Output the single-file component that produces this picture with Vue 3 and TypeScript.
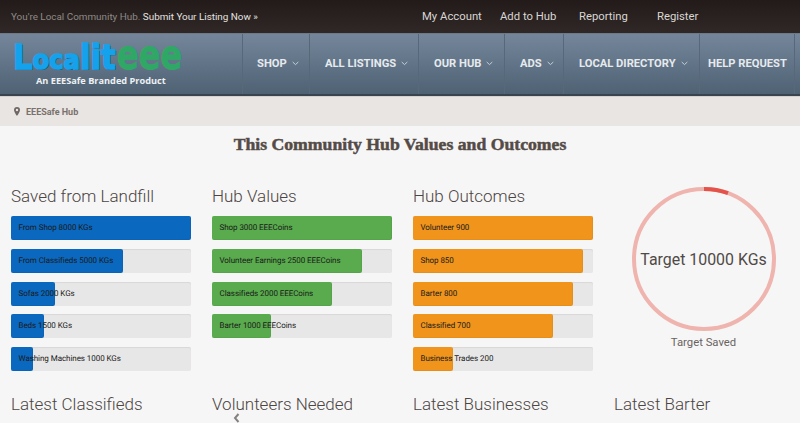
<script setup lang="ts">
interface Bar { label: string; pct: number }
interface Col { title: string; tone: string; bars: Bar[] }
const navItems: { label: string; width: number; caret: boolean }[] = [
  { label: 'SHOP', width: 67, caret: true },
  { label: 'ALL LISTINGS', width: 109, caret: true },
  { label: 'OUR HUB', width: 86, caret: true },
  { label: 'ADS', width: 59, caret: true },
  { label: 'LOCAL DIRECTORY', width: 136, caret: true },
  { label: 'HELP REQUEST', width: 96, caret: false },
]
const topLinks = [
  { label: 'My Account', width: 78 },
  { label: 'Add to Hub', width: 79 },
  { label: 'Reporting', width: 78 },
  { label: 'Register', width: 60 },
]
const cols: Col[] = [
  { title: 'Saved from Landfill', tone: 'blue', bars: [
    { label: 'From Shop 8000 KGs', pct: 100 },
    { label: 'From Classifieds 5000 KGs', pct: 62.3 },
    { label: 'Sofas 2000 KGs', pct: 24.6 },
    { label: 'Beds 1500 KGs', pct: 18.5 },
    { label: 'Washing Machines 1000 KGs', pct: 12.4 },
  ] },
  { title: 'Hub Values', tone: 'green', bars: [
    { label: 'Shop 3000 EEECoins', pct: 100 },
    { label: 'Volunteer Earnings 2500 EEECoins', pct: 83.3 },
    { label: 'Classifieds 2000 EEECoins', pct: 66.6 },
    { label: 'Barter 1000 EEECoins', pct: 33 },
  ] },
  { title: 'Hub Outcomes', tone: 'orange', bars: [
    { label: 'Volunteer 900', pct: 100 },
    { label: 'Shop 850', pct: 94.3 },
    { label: 'Barter 800', pct: 88.7 },
    { label: 'Classified 700', pct: 77.6 },
    { label: 'Business Trades 200', pct: 22 },
  ] },
]
const latest = ['Latest Classifieds', 'Volunteers Needed', 'Latest Businesses', 'Latest Barter']
</script>

<template>
  <div class="page">
    <header class="topbar">
      <p class="tagline">You're Local Community Hub. <a class="submit">Submit Your Listing Now »</a></p>
      <nav class="toplinks">
        <a v-for="l in topLinks" :key="l.label" :style="{ width: l.width + 'px' }">{{ l.label }}</a>
      </nav>
    </header>

    <div class="mainnav">
      <div class="brand">
        <div class="logo">
          <span class="blue-t"><span class="big">L</span>oca<span class="big">lit</span></span><span class="green-t">eee</span>
        </div>
        <div class="brand-sub">An EEESafe Branded Product</div>
      </div>
      <nav class="navlist">
        <a v-for="n in navItems" :key="n.label" class="navitem" :style="{ width: n.width + 'px' }">
          {{ n.label }}
          <svg v-if="n.caret" width="7" height="5" viewBox="0 0 7 5" class="caret">
            <path d="M.7 1l2.8 2.6L6.300 1" fill="none" stroke="#c3ced9" stroke-width="1" />
          </svg>
        </a>
      </nav>
    </div>

    <div class="crumb">
      <svg width="6" height="9" viewBox="0 0 6 9" class="pin">
        <path d="M3 0a3 3 0 0 1 3 3c0 2-3 6-3 6S0 5 0 3a3 3 0 0 1 3-3zm0 1.800a1.200 1.200 0 1 0 0 2.400 1.200 1.200 0 0 0 0-2.400z" fill="#6f6763" fill-rule="evenodd" />
      </svg>
      <span>EEESafe Hub</span>
    </div>

    <main class="content">
      <h1 class="title">This Community Hub Values and Outcomes</h1>
      <section class="grid charts">
        <div v-for="c in cols" :key="c.title" class="col">
          <h2>{{ c.title }}</h2>
          <div class="bars">
            <div v-for="b in c.bars" :key="b.label" class="bar">
              <div class="fill" :class="c.tone" :style="{ width: b.pct + '%' }"></div>
              <span class="bar-label">{{ b.label }}</span>
            </div>
          </div>
        </div>
        <div class="col ring-col">
          <div class="ring">
            <svg width="144" height="144" viewBox="0 0 144 144" class="ring-svg">
              <circle cx="72" cy="72" r="70" fill="none" stroke="#efb4ae" stroke-width="4" />
              <path d="M72 2A70 70 0 0 1 96 6.200" fill="none" stroke="#e4534a" stroke-width="4" />
            </svg>
            <span class="ring-text">Target 10000 KGs</span>
          </div>
          <div class="ring-cap">Target Saved</div>
        </div>
      </section>
      <section class="grid latest">
        <h2 v-for="t in latest" :key="t">{{ t }}</h2>
      </section>
      <svg width="7" height="10" viewBox="0 0 7 10" class="prev">
        <path d="M5.500 1L2 5l3.500 4" fill="none" stroke="#85817f" stroke-width="2" />
      </svg>
    </main>
  </div>
</template>

<style>
html, body { margin: 0; background: #f7f6f6; }
</style>

<style scoped>
.page {
  position: relative;
  width: 800px;
  height: 423px;
  overflow: hidden;
  font-family: Roboto, "Liberation Sans", sans-serif;
  background: #f7f6f6;
}
.topbar {
  height: 33px;
  display: flex;
  align-items: center;
  padding-left: 11px;
  background: linear-gradient(#221b19, #302826);
  box-sizing: border-box;
}
.tagline {
  margin: 0;
  width: 411px;
  font-size: 9.900px;
  color: #8f8a86;
  white-space: nowrap;
}
.submit { color: #e4e2e0; }
.toplinks { display: flex; }
.toplinks a { font-size: 11.300px; color: #d9d6d3; white-space: nowrap; }
.mainnav {
  height: 63px;
  display: flex;
  background: linear-gradient(#75869a, #4e6274);
  border-bottom: 2px solid #38454f;
  border-top: 1px solid #6d7a86;
  box-sizing: border-box;
}
.brand { width: 242px; padding-left: 13px; box-sizing: border-box; }
.logo {
  display: flex;
  align-items: baseline;
  height: 41px;
  font-family: "DejaVu Sans", sans-serif;
  font-weight: 700;
  line-height: 42px;
  white-space: nowrap;
}
.blue-t {
  display: inline-block;
  width: 104px;
  font-size: 27px;
  color: #14a2ec;
  -webkit-text-stroke: 1.400px #14a2ec;
  text-shadow: 1px 1px 0 #125a80;
  letter-spacing: 0;
  transform: scaleX(0.9);
  transform-origin: left bottom;
}
.big { font-size: 34px; }
.green-t {
  display: inline-block;
  font-size: 41px;
  color: #2fa866;
  -webkit-text-stroke: 0.800px #2fa866;
  transform: scaleX(0.78);
  transform-origin: left bottom;
}
.brand-sub {
  margin-left: 23px;
  font-family: "Open Sans", sans-serif;
  font-size: 9.200px;
  font-weight: 700;
  line-height: 12px;
  color: #eef1f3;
  white-space: nowrap;
}
.navlist { display: flex; }
.navitem {
  height: 60px;
  display: flex;
  align-items: center;
  gap: 5px;
  box-sizing: border-box;
  border-left: 1px solid #56687a;
  padding: 0 0 2px 15px;
  font-size: 11.200px;
  font-weight: 700;
  color: #e6eaed;
  white-space: nowrap;
}
.navitem:first-child { padding-left: 14px; }
.navitem:last-child { border-right: 1px solid #56687a; padding-left: 8px; }
.caret { flex: none; margin-top: 1px; }
.crumb {
  height: 30px;
  display: flex;
  align-items: center;
  gap: 6px;
  padding-left: 14px;
  box-sizing: border-box;
  background: #e8e5e3;
  border-top: 1px solid #d4d1cf;
  font-size: 9px;
  font-weight: 700;
  color: #7b716c;
}
.content { position: relative; padding: 8px 0 0 11px; }
.title {
  margin: 0 0 0 -11px;
  height: 20px;
  text-align: center;
  font-family: "Liberation Serif", serif;
  font-size: 17.700px;
  line-height: 20px;
  font-weight: 700;
  color: #544b46;
  -webkit-text-stroke: 0.500px #544b46;
}
.grid {
  display: grid;
  grid-template-columns: repeat(4, 181px);
  column-gap: 20px;
}
.charts { margin-top: 31px; }
h2 {
  margin: 0;
  font-size: 17px;
  font-weight: 300;
  line-height: 22px;
  color: #4b4543;
  white-space: nowrap;
}
.col { min-width: 0; }
.bars { display: flex; flex-direction: column; gap: 8.800px; margin-top: 9px; }
.bar {
  position: relative;
  width: 180px;
  height: 24px;
  background: #e8e7e7;
  border-radius: 2px;
  box-shadow: inset 0 1px 1px #d9d8d8;
}
.fill { height: 100%; border-radius: 2px; box-shadow: inset -1px -1px 0 rgba(0, 0, 0, 0.04); }
.fill.blue { background: #0b68bf; }
.fill.green { background: #59ab4d; }
.fill.orange { background: #f0941c; }
.bar-label {
  position: absolute;
  left: 7.500px;
  top: 0;
  line-height: 24px;
  font-size: 8px;
  letter-spacing: -0.060px;
  text-rendering: geometricPrecision;
  color: #1a1a1a;
  white-space: nowrap;
}
.ring-col { display: flex; flex-direction: column; align-items: center; margin-left: -2px; }
.ring {
  position: relative;
  width: 144px;
  height: 144px;
  margin-top: 2px;
}
.ring-svg { display: block; }
.ring-text {
  position: absolute;
  inset: 0;
  display: flex;
  align-items: center;
  justify-content: center;
  font-size: 15.900px;
  color: #4f4a47;
  white-space: nowrap;
}
.ring-cap { margin-top: 5px; font-size: 11.300px; line-height: 14px; color: #686361; }
.latest { margin-top: 22px; }
.prev { position: absolute; left: 233px; top: 287px; }
</style>
